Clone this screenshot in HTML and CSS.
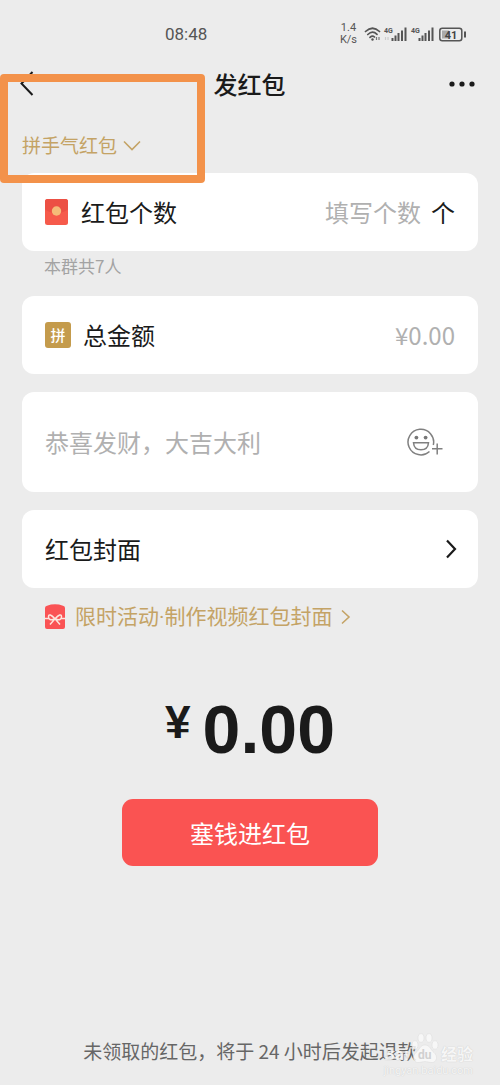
FILE: index.html
```html
<!DOCTYPE html>
<html lang="zh-CN">
<head>
<meta charset="utf-8">
<meta name="viewport" content="width=device-width, initial-scale=1">
<title>发红包</title>
<link rel="stylesheet" href="styles.css">
</head>
<body>
<div class="screen">
  <div class="status">
    <span class="clock">08:48</span>
    <div class="status-right">
      <span class="speed"><span>1.4</span><span>K/s</span></span>
      <svg class="status-icons" width="104" height="20" viewBox="0 0 104 20" aria-hidden="true">
        <g fill="none" stroke="#555" stroke-width="1.7" stroke-linecap="round">
          <path d="M1.5 7.5Q8.500 1 15.500 7.500M3.800 10.500Q8.500 6 13 10.300M6 13.300Q8.500 11 10.500 13"/>
        </g>
        <circle cx="8.500" cy="15.500" r="1.200" fill="#555"/>
        <path d="M12.500 13v3M15 13v3" stroke="#777" stroke-width="1.200"/>
        <text x="20" y="9" class="net">4G</text>
        <path d="M21.500 13v3M24 13v3" stroke="#ccc" stroke-width="1.200"/>
        <path d="M28.500 14v3M31.500 11.500V17M34.500 9V17M38 6.500V17M41.500 3.500V17" stroke="#555" stroke-width="2"/>
        <text x="47" y="9" class="net">4G</text>
        <path d="M55.500 14v3M58.500 11.500V17M61.500 9V17M65 6.500V17M68.500 3.500V17" stroke="#555" stroke-width="2"/>
        <rect x="75.800" y="4.200" width="22" height="12.500" rx="2.500" fill="none" stroke="#555" stroke-width="1.500"/>
        <rect x="78" y="6.500" width="7" height="8" fill="#aaa"/>
        <path d="M101 7.500v6" stroke="#555" stroke-width="2"/>
        <text x="87" y="14.500" class="level">41</text>
      </svg>
    </div>
  </div>

  <header class="header">
    <button class="icon-button back" aria-label="返回">
      <svg width="14" height="26" viewBox="0 0 14 26" aria-hidden="true"><path d="M12.500 1L1.500 12.500L12.500 24" fill="none" stroke="#1a1a1a" stroke-width="2"/></svg>
    </button>
    <h1 class="title">发红包</h1>
    <button class="icon-button more" aria-label="更多">
      <svg width="26" height="6" viewBox="0 0 26 6" aria-hidden="true"><g fill="#1a1a1a"><circle cx="3" cy="3" r="2.600"/><circle cx="13" cy="3" r="2.600"/><circle cx="23" cy="3" r="2.600"/></g></svg>
    </button>
  </header>

  <main class="form">
    <button class="type" aria-haspopup="menu">拼手气红包
      <svg width="18" height="11" viewBox="0 0 18 11" aria-hidden="true"><path d="M1 1.500L9 9.500L17 1.500" fill="none" stroke="#c4a365" stroke-width="1.600"/></svg>
    </button>

    <div class="card">
      <svg class="envelope" width="24" height="26" viewBox="0 0 24 26" aria-hidden="true"><rect width="23" height="26" rx="2.500" fill="#f65a4b"/><path d="M0 2.500Q0 0 2.500 0H20.500Q23 0 23 2.500V10.500Q11.500 18 0 10.500z" fill="#ec5044"/><circle cx="11.500" cy="12" r="4.700" fill="#f5bb78"/></svg>
      <label class="label" for="count">红包个数</label>
      <input class="field" id="count" inputmode="numeric" placeholder="填写个数">
      <span class="unit">个</span>
    </div>
    <p class="note">本群共7人</p>

    <div class="card">
      <span class="lucky" aria-hidden="true">拼</span>
      <label class="label" for="amount">总金额</label>
      <input class="field" id="amount" inputmode="decimal" placeholder="¥0.00">
    </div>

    <div class="card message">
      <input class="field wish" aria-label="祝福语" placeholder="恭喜发财，大吉大利">
      <button class="icon-button" aria-label="添加表情">
        <svg width="36" height="28" viewBox="0 0 36 28" aria-hidden="true"><g fill="none" stroke="#808080" stroke-width="1.500"><path d="M26.300 17A12.800 12.800 0 1 0 22.500 23.500"/><path d="M6.500 14.700H21.500Q21 21.700 14 21.700Q7 21.700 6.500 14.700z"/><path d="M25 20.800H35.500M30.200 15.500V26.500"/></g><circle cx="9.400" cy="9.600" r="1.900" fill="#777"/><circle cx="18.600" cy="9.600" r="1.900" fill="#777"/></svg>
      </button>
    </div>

    <button class="card cover">
      <span>红包封面</span>
      <svg width="12" height="20" viewBox="0 0 12 20" aria-hidden="true"><path d="M2 1.500L10 10L2 18.500" fill="none" stroke="#1a1a1a" stroke-width="2.200"/></svg>
    </button>

    <a class="promo" href="#">
      <svg width="20" height="26" viewBox="0 0 20 26" aria-hidden="true"><path d="M0 4Q0 2.300 2 1.700Q10-1 18 1.700Q20 2.300 20 4V23Q20 25 18 25H2Q0 25 0 23z" fill="#fa5355"/><g fill="none" stroke="#fde5de" stroke-width="1.500"><path d="M0 14.500H3.500M16.500 14.500H20M10 14.800Q4 8.500 3.500 12.500Q3.300 17.500 10 14.800Q16 8.500 16.500 12.500Q16.700 17.500 10 14.800L5 20.500M10 14.800L15 20.500"/></g></svg>
      <span class="promo-text">限时活动·制作视频红包封面</span>
      <svg width="10" height="16" viewBox="0 0 10 16" aria-hidden="true"><path d="M1 1.500L8 8L1 14.500" fill="none" stroke="#c4a365" stroke-width="1.600"/></svg>
    </a>

    <div class="total"><span class="currency">¥</span><span>0.00</span></div>
    <button class="submit">塞钱进红包</button>
  </main>

  <footer class="footer">未领取的红包，将于 24 小时后发起退款</footer>

  <div class="highlight"></div>
  <div class="watermark" aria-hidden="true">
    <div class="brand">
      <span>Bai</span>
      <svg width="28" height="32" viewBox="0 0 28 32"><g fill="#fafafa" stroke="#ddd" stroke-width=".6"><ellipse cx="4" cy="12" rx="3" ry="4.200"/><ellipse cx="10" cy="5" rx="3" ry="4.300"/><ellipse cx="18" cy="5" rx="3" ry="4.300"/><ellipse cx="24" cy="12" rx="3" ry="4.200"/><path d="M14 12C9 12 8.500 17 5 19.500C1 23 2 29.500 7 29.500C10 29.500 12 28.500 14 28.500C16 28.500 18 29.500 21 29.500C26 29.500 27 23 23 19.500C19.500 17 19 12 14 12z"/></g><text x="7" y="26" class="paw-text">du</text></svg>
      <span>经验</span>
    </div>
    <span class="site">jingyan.baidu.com</span>
  </div>
</div>
</body>
</html>
```
FILE: styles.css
```css
* {
  box-sizing: border-box;
}

body {
  margin: 0;
  background: #ececec;
  color: #1a1a1a;
  font-family: "Noto Sans CJK SC", sans-serif;
  font-size: 24px;
}

button,
input {
  margin: 0;
  padding: 0;
  border: 0;
  background: none;
  color: inherit;
  font: inherit;
}

svg {
  display: block;
  flex: none;
}

.screen {
  position: relative;
  display: flex;
  flex-direction: column;
  min-height: 100vh;
}

.status {
  display: flex;
  align-items: center;
  justify-content: space-between;
  height: 60px;
  padding: 8px 32px 0 165px;
  color: #555;
}

.clock {
  font: 17px/20px Roboto, sans-serif;
}

.status-right {
  display: flex;
  align-items: center;
  gap: 7px;
}

.speed {
  display: flex;
  flex-direction: column;
  align-items: center;
  font: 11px/12px Roboto, sans-serif;
}

.net {
  fill: #555;
  font: bold 7px Roboto, sans-serif;
}

.level {
  fill: #444;
  font: bold 11px Roboto, sans-serif;
  text-anchor: middle;
}

.header {
  display: grid;
  grid-template-columns: 1fr auto 1fr;
  align-items: center;
  height: 48px;
  padding: 0 25px 0 20px;
}

.title {
  margin: 0 0 0 4px;
  font-size: 24px;
  font-weight: 500;
  line-height: 36px;
}

.more {
  justify-self: end;
}

.back {
  justify-self: start;
}

.form {
  display: flex;
  flex-direction: column;
  padding: 23px 22px 0;
}

.type {
  display: flex;
  align-items: center;
  align-self: flex-start;
  gap: 6px;
  margin-bottom: 14px;
  color: #c4a365;
  font-size: 19px;
  line-height: 28px;
}

.card {
  display: flex;
  align-items: center;
  width: 100%;
  min-height: 78px;
  margin-bottom: 18px;
  padding: 0 23px;
  border-radius: 12px;
  background: #fff;
  line-height: 36px;
}

.label {
  flex: none;
  margin-left: 12px;
}

.field {
  flex: 1;
  min-width: 0;
  height: 36px;
  outline: 0;
  text-align: right;
}

.field::placeholder {
  color: #b0b0b0;
  opacity: 1;
}

.unit {
  margin-left: 10px;
}

.note {
  margin: -17px 22px 17px;
  color: #a3a3a3;
  font-size: 17px;
  line-height: 27px;
}

.lucky {
  width: 26px;
  border-radius: 3px;
  background: #c49b4c;
  color: #fff;
  font-size: 15px;
  font-weight: 500;
  line-height: 26px;
  text-align: center;
}

.message {
  min-height: 100px;
  padding-right: 35px;
}

.wish {
  text-align: left;
}

.cover {
  justify-content: space-between;
  padding-right: 21px;
}

.promo {
  display: flex;
  align-items: center;
  align-self: flex-start;
  margin: -4px 0 0 23px;
  color: #c4a365;
  font-family: Roboto, "Noto Sans CJK SC", sans-serif;
  font-size: 21px;
  line-height: 30px;
  text-decoration: none;
}

.promo-text {
  margin: 0 8px 0 10px;
}

.total {
  display: flex;
  align-items: flex-start;
  justify-content: center;
  gap: 12px;
  margin-top: 57px;
  font: bold 68px/80px "Liberation Sans", sans-serif;
}

.currency {
  font-size: 46px;
  line-height: 66px;
}

.submit {
  align-self: center;
  width: 256px;
  height: 67px;
  margin-top: 30px;
  border-radius: 11px;
  background: #fa5352;
  color: #fff;
}

.footer {
  margin-top: auto;
  padding-bottom: 20px;
  color: #666;
  font-size: 19px;
  line-height: 28px;
  text-align: center;
}

.highlight {
  position: absolute;
  top: 74px;
  left: 0;
  width: 205px;
  height: 109px;
  border: 8px solid #f3924a;
  border-radius: 4px;
  pointer-events: none;
}

.watermark {
  position: absolute;
  right: 27px;
  bottom: 8px;
  display: flex;
  flex-direction: column;
  align-items: flex-end;
  color: #f8f8f8;
  opacity: 0.85;
  pointer-events: none;
  text-shadow: 0 0 1px #bbb;
}

.brand {
  display: flex;
  align-items: flex-end;
  gap: 2px;
  font-size: 16px;
  font-weight: 700;
  line-height: 24px;
}

.paw-text {
  fill: #ccc;
  font: bold 12px Roboto, sans-serif;
  text-shadow: none;
}

.site {
  font: 11px/12px Roboto, sans-serif;
}
```
